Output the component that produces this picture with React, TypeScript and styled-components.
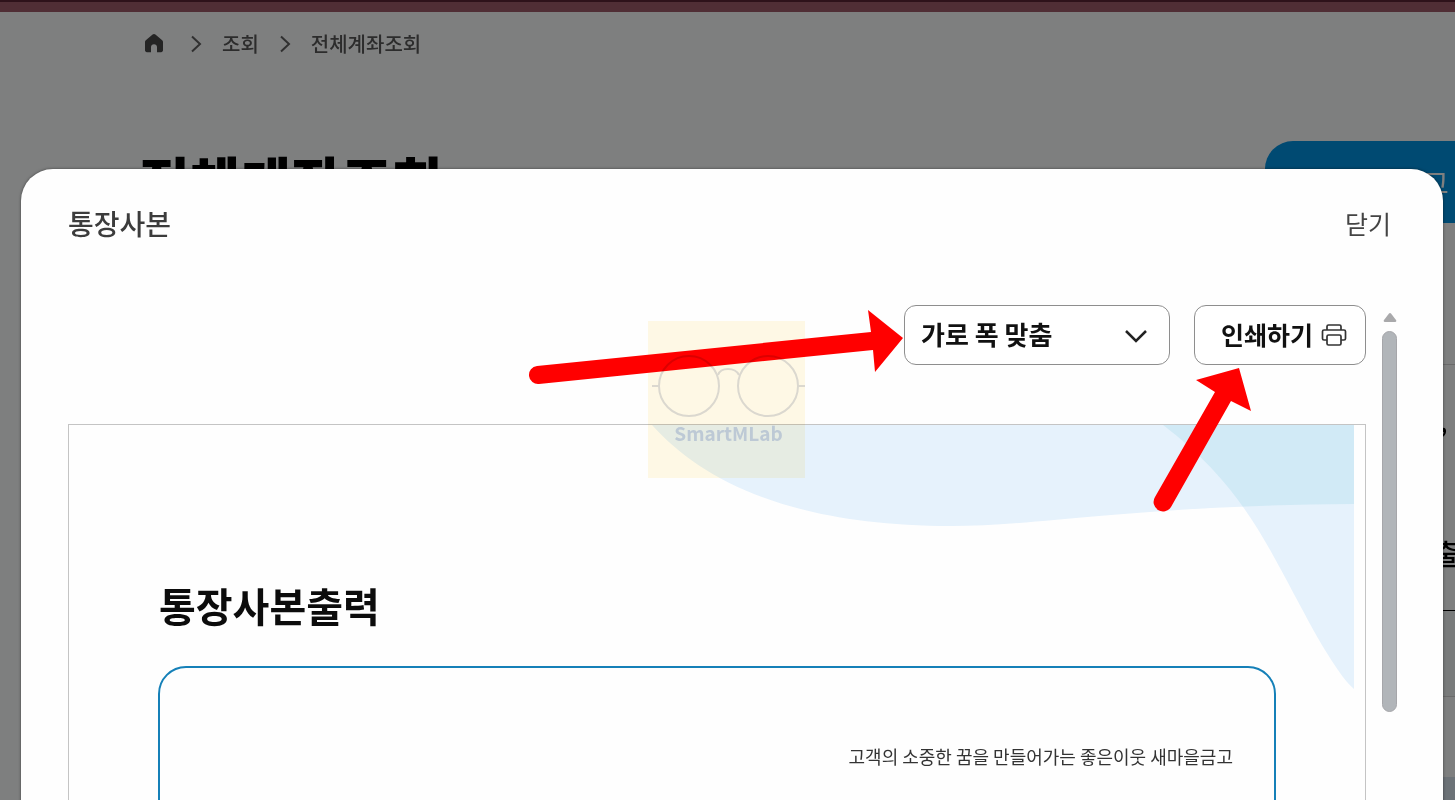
import React from "react";
import styled, { createGlobalStyle } from "styled-components";

const GlobalStyle = createGlobalStyle`
  *, *::before, *::after { box-sizing: border-box; }
  body {
    margin: 0;
    background: #fdfeff;
    font-family: "Noto Sans CJK KR", "Noto Sans", sans-serif;
  }
  button, select { font-family: inherit; }
`;

const Page = styled.div`
  position: relative;
  height: 100vh;
  overflow: hidden;
`;

const TopBar = styled.div`
  height: 12px;
  background: #a05c6a;
  border-top: 2px solid #5c2434;
`;

const Breadcrumb = styled.nav`
  display: flex;
  align-items: center;
  gap: 20px;
  height: 64px;
  padding-left: 144px;
  font-size: 20px;
  font-weight: 500;
  line-height: 28px;
`;

const Crumb = styled.a`
  display: flex;
  color: #585858;
  text-decoration: none;
`;

const HomeCrumb = styled(Crumb)`
  padding-right: 6px;
`;

const Separator = styled.svg`
  width: 12px;
  height: 18px;
`;

const PageHead = styled.div`
  display: flex;
  align-items: flex-start;
  justify-content: space-between;
  padding: 65px 0 0 139px;
`;

const PageTitle = styled.h1`
  margin: 6px 0 0;
  font-size: 55px;
  line-height: 64px;
  font-weight: 900;
  color: #000000;
`;

const BlueButton = styled.button`
  flex: none;
  width: 250px;
  height: 82px;
  margin-right: -60px;
  padding: 0 0 0 158px;
  border: 0;
  border-radius: 28px;
  background: #0094e4;
  color: #ffffff;
  font-size: 28px;
  text-align: left;
`;

const SideList = styled.div`
  width: 190px;
  margin-left: auto;
`;

const SideRow = styled.div<{ $height: number; $line?: string; $fill?: string }>`
  display: flex;
  align-items: center;
  height: ${(p) => p.$height}px;
  padding-left: 168px;
  border-bottom: 1px solid ${(p) => p.$line ?? "transparent"};
  background: ${(p) => p.$fill ?? "transparent"};
  font-size: 28px;
  font-weight: 500;
  white-space: nowrap;
`;

const Overlay = styled.div`
  position: absolute;
  inset: 0;
  overflow: hidden;
  padding: 169px 12px 0 21px;
  background: rgba(0, 0, 0, 0.5);
`;

const Dialog = styled.section`
  min-height: 100%;
  border-radius: 32px;
  background: #fefefe;
  box-shadow: 0 0 3px rgba(0, 0, 0, 0.5);
`;

const DialogHead = styled.header`
  display: flex;
  align-items: center;
  justify-content: space-between;
  height: 112px;
  padding: 0 52px 4px 47px;
`;

const DialogTitle = styled.h2`
  margin: 0;
  font-size: 28px;
  line-height: 40px;
  font-weight: 500;
  color: #3c3c3c;
`;

const CloseButton = styled.button`
  padding: 0;
  border: 0;
  background: none;
  color: #444444;
  font-size: 25px;
  line-height: 40px;
`;

const DialogBody = styled.div`
  display: flex;
  gap: 16px;
  padding: 0 46px 0 47px;
`;

const Content = styled.div`
  position: relative;
  flex: 1;
  min-width: 0;
`;

const Toolbar = styled.div`
  display: flex;
  justify-content: flex-end;
  gap: 24px;
  padding: 24px 0 59px;
`;

const SelectWrap = styled.label`
  position: relative;
  width: 266px;
`;

const FitSelect = styled.select`
  appearance: none;
  width: 100%;
  height: 60px;
  padding: 0 48px 3px 16px;
  border: 1px solid #8e8e8e;
  border-radius: 12px;
  background: #ffffff;
  color: #111111;
  font-size: 26px;
  font-weight: 600;
`;

const Chevron = styled.svg`
  position: absolute;
  top: 22px;
  right: 22px;
  width: 24px;
  height: 18px;
  pointer-events: none;
`;

const PrintButton = styled.button`
  display: flex;
  align-items: center;
  justify-content: center;
  gap: 8px;
  width: 172px;
  height: 60px;
  padding: 0 0 0 8px;
  border: 1px solid #8e8e8e;
  border-radius: 12px;
  background: #ffffff;
  color: #111111;
  font-size: 25px;
  font-weight: 600;
`;

const PrintLabel = styled.span`
  padding-bottom: 3px;
`;

const Sheet = styled.article`
  position: relative;
  padding: 152px 89px 0;
  border: 1px solid #c4c4c4;
  background: #fefefe;
`;

const SheetWave = styled.svg`
  position: absolute;
  top: 0;
  right: 11px;
  width: 712px;
  height: 265px;
`;

const SheetTitle = styled.h3`
  position: relative;
  margin: 0;
  padding-left: 1px;
  font-size: 40px;
  line-height: 56px;
  font-weight: 700;
  color: #0c0c0c;
`;

const PassbookBox = styled.div`
  position: relative;
  height: 400px;
  margin-top: 33px;
  padding: 74px 41px 0;
  border: 2px solid #1580b8;
  border-radius: 28px;
  font-size: 18px;
  line-height: 28px;
  color: #333333;
  text-align: right;
`;

const ScrollColumn = styled.div`
  display: flex;
  flex-direction: column;
  align-items: center;
  gap: 9px;
  width: 15px;
  padding-top: 32px;
`;

const ScrollThumb = styled.div`
  width: 15px;
  height: 381px;
  border: 1px solid #a6a6aa;
  border-radius: 8px;
  background: #b1b5b9;
`;

const Arrows = styled.svg`
  position: absolute;
  top: 19px;
  right: 106px;
  width: 740px;
  height: 220px;
  pointer-events: none;
`;

const Watermark = styled.div`
  position: absolute;
  top: 40px;
  right: 561px;
  width: 157px;
  height: 157px;
  padding: 30px 0 0 4px;
  background: #fff9e6;
  mix-blend-mode: multiply;
  color: #d2d4d8;
  font-size: 19px;
  line-height: 24px;
  font-weight: 700;
  text-align: center;
  pointer-events: none;
`;

const Glasses = styled.svg`
  display: block;
  width: 157px;
  height: 70px;
  margin-left: -4px;
`;

const ArrowSep = () => (
  <Separator viewBox="0 0 12 18" fill="none" stroke="#606060" strokeWidth="2" aria-hidden>
    <path d="M2 1.5 10 9 2 16.5" />
  </Separator>
);

export default function App() {
  return (
    <Page>
      <GlobalStyle />
      <TopBar />
      <Breadcrumb aria-label="breadcrumb">
        <HomeCrumb href="#" aria-label="home">
          <svg width="20" height="20" viewBox="0 0 20 20" fill="#484848">
            <path d="M10 0c.6 0 1 .2 1.400.5l6.500 5.400c.8.6 1.100 1.300 1.100 2.200v8.200c0 1.100-.8 1.900-1.900 1.900H13v-5.200c0-1.700-1.200-2.800-3-2.800s-3 1.100-3 2.800v5.200H2.900C1.800 18.200 1 17.400 1 16.300V8.100c0-.9.3-1.600 1.100-2.200L8.600.5C9 .2 9.400 0 10 0z" />
          </svg>
        </HomeCrumb>
        <ArrowSep />
        <Crumb href="#">조회</Crumb>
        <ArrowSep />
        <Crumb href="#">전체계좌조회</Crumb>
      </Breadcrumb>
      <PageHead>
        <PageTitle>전체계좌조회</PageTitle>
        <BlueButton type="button">고</BlueButton>
      </PageHead>
      <SideList>
        <SideRow $height={142} $line="#d4d4d4" />
        <SideRow $height={110}>
          <span>&nbsp;,</span>
        </SideRow>
        <SideRow $height={20} />
        <SideRow $height={116} $line="#000000">출</SideRow>
        <SideRow $height={86} $line="#d4d4d4" $fill="#f2f6f6" />
        <SideRow $height={80} />
        <SideRow $height={60} $fill="#d8e4ee" />
      </SideList>

      <Overlay>
        <Dialog role="dialog" aria-labelledby="dialog-title">
          <DialogHead>
            <DialogTitle id="dialog-title">통장사본</DialogTitle>
            <CloseButton type="button">닫기</CloseButton>
          </DialogHead>
          <DialogBody>
            <Content>
              <Toolbar>
                <SelectWrap>
                  <FitSelect aria-label="가로 폭 맞춤">
                    <option>가로 폭 맞춤</option>
                  </FitSelect>
                  <Chevron viewBox="0 0 24 18" fill="none" stroke="#222222" strokeWidth="2.500" aria-hidden>
                    <path d="M2 4 12 14 22 4" />
                  </Chevron>
                </SelectWrap>
                <PrintButton type="button">
                  <PrintLabel>인쇄하기</PrintLabel>
                  <svg width="26" height="24" viewBox="0 0 26 24" fill="none" stroke="#333333" strokeWidth="1.700" aria-hidden>
                    <path d="M6 7V3.500Q6 2 7.500 2h11Q20 2 20 3.500V7" />
                    <path d="M6 17H3Q1.500 17 1.500 15.500v-7Q1.500 7 3 7h20q1.500 0 1.500 1.500v7Q24.500 17 23 17h-3" />
                    <rect x="6" y="12" width="14" height="10" rx="1.500" />
                  </svg>
                </PrintButton>
              </Toolbar>

              <Sheet>
                <SheetWave viewBox="0 0 712 265" aria-hidden>
                  <defs>
                    <clipPath id="wave-clip">
                      <path d="M10 0C60 56 150 101 309 101C400 101 500 80 712 79V0Z" />
                    </clipPath>
                  </defs>
                  <path fill="#e6f2fc" d="M10 0C60 56 150 101 309 101C400 101 500 80 712 79V0Z" />
                  <path fill="#e6f2fc" d="M521 0C600 60 625 120 660 184C680 222 700 254 712 264V0Z" />
                  <path fill="#d1eaf6" clipPath="url(#wave-clip)" d="M521 0C600 60 625 120 660 184C680 222 700 254 712 264V0Z" />
                </SheetWave>
                <SheetTitle>통장사본출력</SheetTitle>
                <PassbookBox>고객의 소중한 꿈을 만들어가는 좋은이웃 새마을금고</PassbookBox>
              </Sheet>

              <Arrows viewBox="520 300 740 220" fill="#ff0000" aria-hidden>
                <path d="M537 366 871 332 868 310 903 338 875 372 873 350 539 384A9 9 0 0 1 537 366Z" />
                <path d="M1155 497 1215 392 1196 380 1239 368 1251 411 1231 401 1171 507A9 9 0 0 1 1155 497Z" />
              </Arrows>
              <Watermark>
                <Glasses viewBox="0 0 157 70" fill="none" stroke="#dcd9d0" strokeWidth="2" aria-hidden>
                  <circle cx="41" cy="35" r="30" />
                  <circle cx="120" cy="35" r="30" />
                  <path d="M70 24Q72 18 80 18T91 24M4 35H11M150 35H157" />
                </Glasses>
                SmartMLab
              </Watermark>
            </Content>
            <ScrollColumn aria-hidden>
              <svg width="14" height="9" viewBox="0 0 14 9" fill="#a9a9ab">
                <path d="M5.800.8Q7-.6 8.200.8L13 7Q14 9 12 9H2Q0 9 1 7Z" />
              </svg>
              <ScrollThumb />
            </ScrollColumn>
          </DialogBody>
        </Dialog>
      </Overlay>
    </Page>
  );
}
